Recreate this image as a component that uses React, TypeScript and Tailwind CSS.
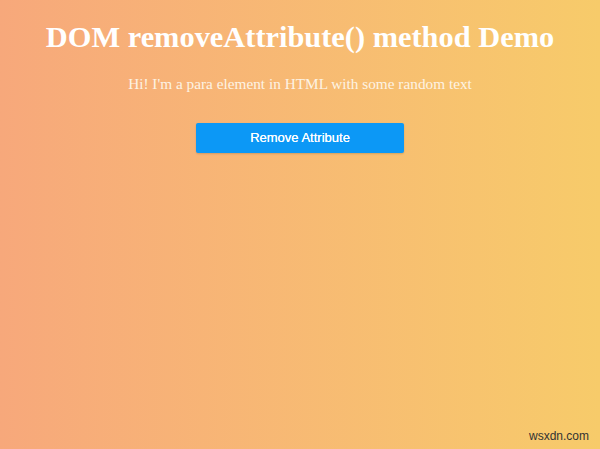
import React from 'react';

const App: React.FC = () => {
    return (
        <div className="relative w-[600px] h-[449px] overflow-hidden bg-gradient-to-r from-[#f7a87b] to-[#f7cb6a] font-['Liberation_Serif',serif]">
            <div className="flex flex-col items-center pt-[18px]">
                <h1 className="text-[30.4px] leading-[38px] font-bold text-white">
                    DOM removeAttribute() method Demo
                </h1>
                <p className="mt-[18px] text-[15.3px] leading-[20px] text-[#fdf3e4]">
                    Hi! I&apos;m a para element in HTML with some random text
                </p>
                <button
                    type="button"
                    className="mt-[29px] w-[208px] h-[30px] rounded-[2px] bg-[#0c98f6] text-white text-[13px] font-['Liberation_Sans',sans-serif] shadow-[0_1px_2px_rgba(0,0,0,0.15)] [text-shadow:0_0_0.4px_#fff]"
                >
                    Remove Attribute
                </button>
            </div>
            {/* watermark */}
            <span className="absolute right-[11px] bottom-[4px] text-[12px] text-[#333] font-['Liberation_Sans',sans-serif]">
                wsxdn.com
            </span>
        </div>
    );
};

export default App;
